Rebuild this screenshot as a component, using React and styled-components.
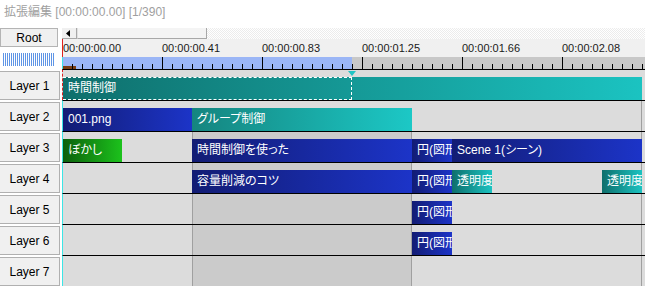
import styled, { createGlobalStyle } from "styled-components"

const GlobalStyle = createGlobalStyle`
  html, body { margin: 0; padding: 0; background: #ffffff; }
  body { font-family: "Liberation Sans", "Noto Sans CJK JP", sans-serif; }
`

// x positions are measured from the first pixel after the cursor line (page x 63)
const layers = [
  { name: "Layer 1", clips: [{ text: "時間制御", left: 0, width: 579, kind: "teal" }], selected: true },
  { name: "Layer 2", clips: [
    { text: "001.png", left: 0, width: 129, kind: "blue" },
    { text: "グループ制御", left: 129, width: 220, kind: "group" },
  ], end: true },
  { name: "Layer 3", group: true, end: true, clips: [
    { text: "ぼかし", left: 0, width: 59, kind: "green" },
    { text: "時間制御を使った", left: 129, width: 220, kind: "blue" },
    { text: "円(図形)", left: 349, width: 40, kind: "blue" },
    { text: "Scene 1(シーン)", left: 389, width: 190, kind: "blue" },
  ] },
  { name: "Layer 4", group: true, end: true, clips: [
    { text: "容量削減のコツ", left: 129, width: 220, kind: "blue" },
    { text: "円(図形)", left: 349, width: 40, kind: "blue" },
    { text: "透明度", left: 389, width: 40, kind: "teal" },
    { text: "透明度", left: 539, width: 40, kind: "teal" },
  ] },
  { name: "Layer 5", group: true, end: true, clips: [{ text: "円(図形)", left: 349, width: 40, kind: "blue" }] },
  { name: "Layer 6", group: true, end: true, clips: [{ text: "円(図形)", left: 349, width: 40, kind: "blue" }] },
  { name: "Layer 7", group: true, end: true, clips: [] },
]

const labels = ["00:00:00.00", "00:00:00.41", "00:00:00.83", "00:00:01.25", "00:00:01.66", "00:00:02.08"]

const gradients = {
  teal: "linear-gradient(to right, #0f6f6c, #1bc3c1)",
  group: "linear-gradient(to right, #15857f, #1cc8c6)",
  blue: "linear-gradient(to right, #121c74, #1c34c8)",
  green: "linear-gradient(to right, #0c600c, #1cc21c)",
}

function RulerTicks() {
  const ticks = []
  for (let x = 9; x < 582; x += 10) {
    const major = (x - 99) % 100 === 0
    ticks.push(<rect key={x} x={x} y={major ? 0 : 7} width="1" height={major ? 12 : 5} fill="#000" />)
  }
  return (
    <svg width="582" height="12" style={{ display: "block" }}>
      <rect x="0" y="0" width="289" height="12" fill="#9bb6f6" />
      <rect x="289" y="0" width="293" height="12" fill="#c8c8c8" />
      <rect x="0" y="9" width="13" height="3" fill="#7a3e14" />
      {ticks}
    </svg>
  )
}

export default function App() {
  return (
    <Window>
      <GlobalStyle />
      <TitleBar>拡張編集 [00:00:00.00] [1/390]</TitleBar>
      <Grid>
        <LeftTop>
          <RootButton>Root</RootButton>
          <StripeBar />
        </LeftTop>
        <RightTop>
          <ScrollBar>
            <ArrowButton>
              <svg width="4" height="7"><polygon points="4,0 4,7 0,3.5" fill="#000" /></svg>
            </ArrowButton>
            <Thumb />
            <ScrollTrack />
          </ScrollBar>
          <TimeLabels>
            {labels.map((l, i) => <TimeLabel key={l} $left={i === 0 ? 0 : i * 100 - 1}>{l}</TimeLabel>)}
          </TimeLabels>
          <Ruler><RulerTicks /></Ruler>
        </RightTop>

        {layers.map((layer) => (
          <Row key={layer.name}>
            <HeaderCell><LayerHeader>{layer.name}</LayerHeader></HeaderCell>
            <Track $selected={layer.selected}>
              {layer.group && <GroupRange />}
              {layer.end && <EndLine />}
              {layer.clips.map((c, i) => (
                <Clip key={i} $left={c.left} $width={c.width} $kind={c.kind}>{c.text}</Clip>
              ))}
              {layer.selected && <Selection />}
              {layer.selected && <Playhead />}
            </Track>
          </Row>
        ))}
      </Grid>
    </Window>
  )
}

const Window = styled.div`
width: 645px;
height: 287px;
overflow: hidden;
background: #ffffff;
`

const TitleBar = styled.div`
height: 28px;
box-sizing: border-box;
padding: 5px 0 0 4px;
font-size: 12px;
line-height: 15px;
color: #9f9f9f;
white-space: nowrap;
`

const Grid = styled.div`
display: grid;
grid-template-columns: 62px 1fr;
`

const LeftTop = styled.div`
height: 41px;
display: flex;
flex-direction: column;
`

const RootButton = styled.div`
width: 58px;
height: 19px;
box-sizing: border-box;
background: #f0f0f0;
border: 1px solid #b4b4b4;
display: flex;
align-items: center;
justify-content: center;
font-size: 12px;
color: #000;
`

const StripeBar = styled.div`
margin: 6px 0 0 3px;
width: 52px;
height: 13px;
background: repeating-linear-gradient(to right, #5f95e6 0 1px, #ffffff 1px 2px);
`

const RightTop = styled.div`
display: flex;
flex-direction: column;
`

const ScrollBar = styled.div`
height: 11px;
display: flex;
`

const ArrowButton = styled.div`
width: 15px;
box-sizing: border-box;
background: #f0f0f0;
border-right: 1px solid #a8a8a8;
border-bottom: 1px solid #a8a8a8;
display: flex;
align-items: center;
padding-left: 4px;
`

const Thumb = styled.div`
width: 130px;
box-sizing: border-box;
background: #f4f4f4;
border-right: 1px solid #a8a8a8;
border-bottom: 1px solid #a8a8a8;
border-left: 1px solid #e0e0e0;
`

const ScrollTrack = styled.div`
flex: 1;
background: repeating-conic-gradient(#ececec 0 25%, #ffffff 0 50%) 0 0 / 2px 2px;
`

const TimeLabels = styled.div`
position: relative;
height: 18px;
background: #f0f0f0;
border-left: 1px solid #e02020;
`

const TimeLabel = styled.span`
position: absolute;
left: ${(p) => p.$left}px;
top: 3px;
font-size: 11px;
line-height: 13px;
color: #1a1a1a;
white-space: nowrap;
`

const Ruler = styled.div`
height: 12px;
border-left: 1px solid #3ce6e6;
overflow: hidden;
`

const Row = styled.div`
display: contents;
`

const HeaderCell = styled.div`
height: 31px;
padding-top: 2px;
box-sizing: border-box;
`

const LayerHeader = styled.div`
width: 60px;
height: 29px;
box-sizing: border-box;
background: #f0f0f0;
border: 1px solid #b0b0b0;
border-left: none;
display: flex;
align-items: center;
justify-content: center;
font-size: 12px;
color: #000;
`

const Track = styled.div`
position: relative;
height: 31px;
box-sizing: border-box;
background: #dcdcdc;
border-top: 1px solid #000;
border-left: 1px ${(p) => (p.$selected ? "dashed #e02020" : "solid #3ce6e6")};
overflow: hidden;
`

const GroupRange = styled.div`
position: absolute;
top: 0;
bottom: 0;
left: 129px;
width: 220px;
box-sizing: border-box;
background: #cbcbcb;
border-left: 1px solid #a0a0a0;
border-right: 1px solid #a0a0a0;
`

const EndLine = styled.div`
position: absolute;
top: 0;
bottom: 0;
left: 578px;
width: 1px;
background: #a0a0a0;
`

const Clip = styled.div`
position: absolute;
bottom: 0;
height: 23px;
left: ${(p) => p.$left}px;
width: ${(p) => p.$width}px;
box-sizing: border-box;
padding-left: 5px;
background: ${(p) => gradients[p.$kind]};
color: #ffffff;
font-size: 12px;
font-feature-settings: "palt";
line-height: 23px;
white-space: nowrap;
overflow: hidden;
`

const Selection = styled.div`
position: absolute;
bottom: 0;
left: 0;
width: 289px;
height: 23px;
box-sizing: border-box;
border: 1px dashed #ffffff;
border-left: none;
`

const Playhead = styled.div`
position: absolute;
top: 1px;
left: 285px;
width: 0;
height: 0;
border-left: 4px solid transparent;
border-right: 4px solid transparent;
border-top: 5px solid #20c4c4;
`
